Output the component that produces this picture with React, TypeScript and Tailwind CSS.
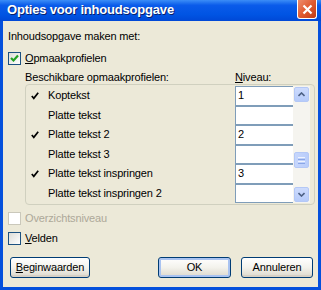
import React from 'react';

const rows = [
  { label: 'Koptekst', checked: true, level: '1' },
  { label: 'Platte tekst', checked: false, level: '' },
  { label: 'Platte tekst 2', checked: true, level: '2' },
  { label: 'Platte tekst 3', checked: false, level: '' },
  { label: 'Platte tekst inspringen', checked: true, level: '3' },
  { label: 'Platte tekst inspringen 2', checked: false, level: '' },
];

const XpCheckbox = ({ checked, disabled }: { checked?: boolean; disabled?: boolean }) => (
  <span
    className={`flex h-[13px] w-[13px] shrink-0 items-center justify-center border ${
      disabled
        ? 'border-[#cac8bb] bg-white'
        : 'border-[#1c5180] bg-gradient-to-br from-[#dcdcd7] to-white'
    }`}
  >
    {checked && (
      <svg width="9" height="9" viewBox="0 0 9 9">
        <path d="M1 4 L3.5 6.5 L8 1.5" fill="none" stroke="#21a121" strokeWidth="2.2" />
      </svg>
    )}
  </span>
);

const ListCheck = () => (
  <svg width="8" height="8" viewBox="0 0 8 8">
    <path d="M0.8 4 L2.8 6.3 L7.2 0.8" fill="none" stroke="#000" strokeWidth="1.7" />
  </svg>
);

const ScrollButton = ({ up }: { up?: boolean }) => (
  <div className="m-px flex h-[15px] w-[15px] items-center justify-center rounded-[2px] border border-[#b4c8f6] bg-gradient-to-b from-[#cddbfd] to-[#b6cbfa]">
    <svg width="7" height="5" viewBox="0 0 7 5">
      <path
        d={up ? 'M0.5 4 L3.5 1 L6.5 4' : 'M0.5 1 L3.5 4 L6.5 1'}
        fill="none"
        stroke="#4d6185"
        strokeWidth="1.6"
      />
    </svg>
  </div>
);

const XpButton = ({ children, isDefault, w }: { children: React.ReactNode; isDefault?: boolean; w: string }) => (
  <button
    className={`flex h-[21px] ${w} items-center justify-center rounded-[3px] border border-[#003c74] bg-gradient-to-b from-white via-[#f3f2ec] to-[#dcd8cc] text-[11px] text-black ${
      isDefault ? 'shadow-[inset_0_0_0_2px_#a9c3f1]' : 'shadow-[inset_0_-2px_0_#d6d0c5]'
    }`}
  >
    {children}
  </button>
);

export default function App() {
  return (
    <div className="flex h-[290px] w-[321px] flex-col bg-[#0550dc] font-['Liberation_Sans',Arial,sans-serif] text-[11px] leading-[13px] tracking-[-0.15px] text-black">
      {/* title bar */}
      <div className="flex h-[21px] shrink-0 items-start bg-[linear-gradient(to_bottom,#3b8df7,#0a5bea_25%,#0054e3_70%,#0048d6)]">
        <span className="ml-[7px] mt-[2px] text-[13px] font-bold leading-[16px] tracking-[-0.2px] text-white [text-shadow:1px_1px_0_#0a1f6b]">
          Opties voor inhoudsopgave
        </span>
        <div className="ml-auto mr-[4px] flex h-[19px] w-[20px] items-center justify-center rounded-b-[3px] border border-t-0 border-white bg-gradient-to-br from-[#ed8c6c] via-[#e05a30] to-[#c23c14]">
          <svg width="11" height="11" viewBox="0 0 11 11">
            <path d="M1.5 1.5 L9.5 9.5 M9.5 1.5 L1.5 9.5" stroke="#fff" strokeWidth="2.2" />
          </svg>
        </div>
      </div>

      {/* body */}
      <div className="mx-[3px] mb-[3px] flex flex-1 flex-col bg-[#ece9d8]">
        <div className="ml-[5px] mt-[9px]">Inhoudsopgave maken met:</div>

        <div className="ml-[5px] mt-[9px] flex h-[13px] items-center gap-[4px]">
          <XpCheckbox checked />
          <span>
            <u className="underline-offset-1">O</u>pmaakprofielen
          </span>
        </div>

        <div className="mt-[6px] flex h-[13px]">
          <span className="ml-[22px] w-[210px]">Beschikbare opmaakprofielen:</span>
          <span>
            <u className="underline-offset-1">N</u>iveau:
          </span>
        </div>

        {/* list frame */}
        <div className="ml-[22px] flex w-[290px] rounded-[4px] border border-[#d0d0bf] py-px">
          <div className="flex w-[209px] flex-col">
            {rows.map((r) => (
              <div key={r.label} className="flex h-[19.5px] items-center">
                <span className="ml-[5px] flex w-[17px]">{r.checked && <ListCheck />}</span>
                <span>{r.label}</span>
              </div>
            ))}
          </div>
          <div className="flex w-[58px] flex-col border-l border-[#7f9db9] bg-white">
            {rows.map((r) => (
              <div
                key={r.label}
                className="flex h-[19.5px] items-center border-y border-[#7f9db9] pl-[2px]"
              >
                {r.level}
              </div>
            ))}
          </div>
          <div className="flex w-[17px] flex-col bg-[#f5f4ef]">
            <ScrollButton up />
            <div className="m-px mt-[49px] flex h-[16px] w-[15px] flex-col items-center justify-center gap-px rounded-[2px] border border-[#b4c8f6] bg-gradient-to-r from-[#c6d6fc] to-[#b9cdfb]">
              <span className="h-px w-[7px] bg-[#eef3fe]" />
              <span className="h-px w-[7px] bg-[#8aa6e6]" />
              <span className="h-px w-[7px] bg-[#eef3fe]" />
              <span className="h-px w-[7px] bg-[#8aa6e6]" />
            </div>
            <div className="flex-1" />
            <ScrollButton />
          </div>
        </div>

        <div className="ml-[5px] mt-[7px] flex h-[13px] items-center gap-[4px] text-[#aca899]">
          <XpCheckbox disabled />
          <span>Overzichtsniveau</span>
        </div>

        <div className="ml-[5px] mt-[7px] flex h-[13px] items-center gap-[4px]">
          <XpCheckbox />
          <span>
            <u className="underline-offset-1">V</u>elden
          </span>
        </div>

        <div className="mt-[12px] flex items-center">
          <div className="ml-[7px]">
            <XpButton w="w-[80px]">
              <span>
                <u className="underline-offset-1">B</u>eginwaarden
              </span>
            </XpButton>
          </div>
          <div className="ml-auto mr-[5px] flex gap-[10px]">
            <XpButton w="w-[73px]" isDefault>
              OK
            </XpButton>
            <XpButton w="w-[72px]">Annuleren</XpButton>
          </div>
        </div>
      </div>
    </div>
  );
}
